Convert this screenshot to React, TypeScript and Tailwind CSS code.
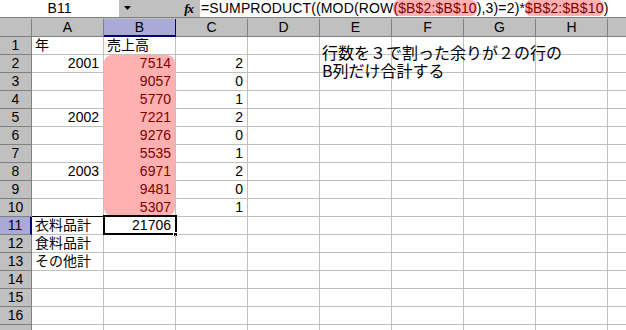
const cols = ["A", "B", "C", "D", "E", "F", "G", "H"]

const data: Record<number, { a?: string; aNum?: boolean; b?: string; c?: string }> = {
  1: { a: "年", b: "売上高" },
  2: { a: "2001", aNum: true, b: "7514", c: "2" },
  3: { b: "9057", c: "0" },
  4: { b: "5770", c: "1" },
  5: { a: "2002", aNum: true, b: "7221", c: "2" },
  6: { b: "9276", c: "0" },
  7: { b: "5535", c: "1" },
  8: { a: "2003", aNum: true, b: "6971", c: "2" },
  9: { b: "9481", c: "0" },
  10: { b: "5307", c: "1" },
  11: { a: "衣料品計", b: "21706" },
  12: { a: "食料品計" },
  13: { a: "その他計" },
}

const rows = Array.from({ length: 17 }, (_, i) => i + 1)

const Range = ({ children }: { children: string }) => (
  <span className="bg-[#ffb0b0] text-[#800000] rounded-[6px]">{children}</span>
)

const Row = ({ n }: { n: number }) => {
  const d = data[n] || {}
  const pink = n >= 2 && n <= 10
  return (
    <div className="flex h-[18px] shrink-0">
      <div
        className={
          "w-[32px] shrink-0 flex items-center justify-center border-b border-[#808080] leading-[17px] " +
          (n === 11 ? "bg-[#aaaad6] border-r-2 border-r-[#000080]" : "bg-[#c0c0c0] border-r border-r-[#808080]")
        }
      >
        {n < 17 ? n : ""}
      </div>
      {/* A */}
      <div
        className={
          "w-[72px] shrink-0 border-r border-b border-[#c0c0c0] flex items-center leading-[17px] " +
          (d.aNum ? "justify-end pr-[4px] " : "pl-[3px] ") +
          (n === 10 ? "border-b-black" : "")
        }
      >
        {d.a}
      </div>
      {/* B */}
      <div
        className={
          "relative w-[72px] shrink-0 border-r border-b border-[#c0c0c0] flex leading-[17px] " +
          (pink && n < 10 ? "border-b-[#ffb0b0]" : "")
        }
      >
        {pink ? (
          <div
            className={
              "w-full h-full bg-[#ffb0b0] text-[#800000] flex items-center justify-end pr-[4px] " +
              (n === 2 ? "rounded-t-[8px]" : "") +
              (n === 10 ? "rounded-b-[8px]" : "")
            }
          >
            {d.b}
          </div>
        ) : n === 1 ? (
          <div className="flex items-center pl-[3px]">{d.b}</div>
        ) : n === 11 ? (
          <>
            <div className="w-full flex items-center justify-end pr-[4px]">{d.b}</div>
            <div className="absolute -top-[2px] -left-[1px] w-[74px] h-[20px] border-2 border-black" />
            <div className="absolute -bottom-[3px] -right-[3px] w-[5px] h-[5px] bg-black border border-white" />
          </>
        ) : null}
      </div>
      {/* C */}
      <div className="w-[72px] shrink-0 border-r border-b border-[#c0c0c0] flex items-center justify-end pr-[4px] leading-[17px]">
        {d.c}
      </div>
      {cols.slice(3).map((c) => (
        <div key={c} className="w-[72px] shrink-0 border-r border-b border-[#c0c0c0]" />
      ))}
      <div className="flex-1 border-b border-[#c0c0c0]" />
    </div>
  )
}

export default function App() {
  return (
    <div className="relative w-[626px] h-[330px] overflow-hidden bg-white text-black text-[14px] font-['Liberation_Sans','Noto_Sans_CJK_JP',sans-serif]">
      {/* formula bar */}
      <div className="flex h-[17px] bg-[#c0c0c0]">
        <div className="w-[119px] bg-white flex items-center justify-center leading-[17px]">B11</div>
        <div className="w-[81px] flex items-center">
          <svg width="8" height="5" viewBox="0 0 8 5" className="ml-[5px]">
            <path d="M0 0h7L3.5 4z" fill="#000" />
          </svg>
          <span className="ml-auto mr-[7px] italic font-bold text-[13px] font-['Liberation_Serif',serif] tracking-[-1px]">
            fx
          </span>
        </div>
        <div className="flex-1 bg-white whitespace-nowrap leading-[17px] pl-[1px] overflow-hidden tracking-[0.15px]">
          =SUMPRODUCT((MOD(ROW<Range>($B$2:$B$10</Range>),3)=2)*<Range>$B$2:$B$10</Range>)
        </div>
      </div>
      <div className="h-[2px] bg-[#c0c0c0] border-t border-[#808080]" />
      {/* column headers */}
      <div className="flex h-[18px] bg-[#c0c0c0]">
        <div className="w-[32px] shrink-0 border-r border-b border-[#808080]" />
        {cols.map((c) => (
          <div
            key={c}
            className={
              "w-[72px] shrink-0 flex items-center justify-center leading-[17px] " +
              (c === "B"
                ? "bg-[#aaaad6] border-r border-r-[#000080] border-b-2 border-b-[#000080]"
                : "border-r border-b border-[#808080]")
            }
          >
            {c}
          </div>
        ))}
        <div className="flex-1 border-b border-[#808080]" />
      </div>
      {rows.map((n) => (
        <Row key={n} n={n} />
      ))}
      {/* text box over E1:H2 */}
      <div className="absolute left-[322px] top-[43px] text-[16px] leading-[18px] whitespace-nowrap font-['Noto_Sans_CJK_JP',sans-serif]">
        <div>行数を３で割った余りが２の行の</div>
        <div>B列だけ合計する</div>
      </div>
    </div>
  )
}
